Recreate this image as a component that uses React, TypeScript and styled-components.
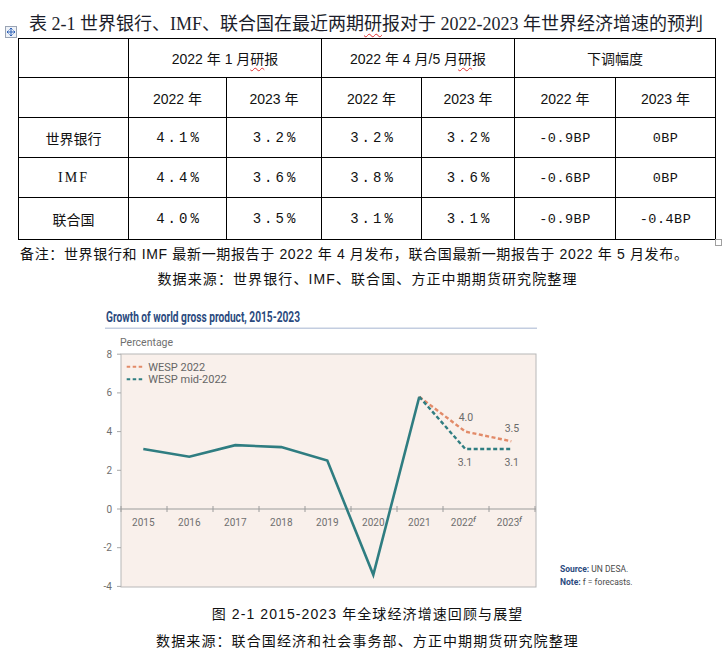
import React from "react";
import styled, { createGlobalStyle } from "styled-components";

const Global = createGlobalStyle`
  html, body { margin: 0; padding: 0; background: #ffffff; }
  body {
    font-family: "Liberation Sans", "Noto Sans CJK SC", sans-serif;
    color: #111111;
  }
`;

const Page = styled.div`
  width: 728px;
  display: flex;
  flex-direction: column;
`;

const TitleRow = styled.div`
  display: flex;
  align-items: flex-end;
  gap: 12px;
  height: 38px;
  padding-left: 5px;
`;

const HandleIcon = styled.svg`
  display: block;
  flex: none;
`;

const TableTitle = styled.h1`
  margin: 0 0 3px 0;
  font-family: "Liberation Serif", "Noto Sans CJK SC", serif;
  font-size: 18px;
  line-height: 22px;
  font-weight: normal;
  color: #1b1d2a;
  white-space: nowrap;
`;

const Flag = styled.span`
  text-decoration: underline wavy #e03030;
  text-decoration-thickness: 1px;
  text-underline-offset: 3px;
`;

const TableWrap = styled.div`
  position: relative;
  margin-left: 18px;
  width: 697px;
`;

const Grid = styled.table`
  border-collapse: collapse;
  table-layout: fixed;
  width: 697px;
`;

const Row = styled.tr<{ $h: number }>`
  height: ${(p) => p.$h}px;
`;

const Cell = styled.td`
  border: 1px solid #000000;
  padding: 0;
  text-align: center;
  vertical-align: middle;
  font-size: 14px;
  color: #111111;
  white-space: nowrap;
`;

const RowName = styled.span<{ $latin?: boolean }>`
  font-family: ${(p) =>
    p.$latin ? `"Liberation Serif", serif` : `"Noto Sans CJK SC", sans-serif`};
  letter-spacing: ${(p) => (p.$latin ? "2px" : "0")};
  font-size: 14px;
`;

const Pct = styled.span`
  font-family: "Liberation Mono", monospace;
  font-size: 14px;
  letter-spacing: 3px;
  margin-right: -3px;
`;

const Bp = styled.span`
  font-family: "Liberation Mono", monospace;
  font-size: 13.5px;
  letter-spacing: 0.5px;
`;

const EndMark = styled.span`
  position: absolute;
  right: -7px;
  bottom: -6px;
  width: 5px;
  height: 5px;
  border: 1px solid #a0a0a0;
`;

const Note = styled.p`
  margin: 4px 0 0 0;
  padding-left: 20px;
  font-size: 14px;
  line-height: 20px;
  letter-spacing: 0.65px;
  color: #111111;
  white-space: nowrap;
`;

const Caption = styled.p<{ $top: number }>`
  margin: ${(p) => p.$top}px 0 0 0;
  text-align: center;
  padding-left: 7px;
  font-size: 14px;
  line-height: 20px;
  letter-spacing: 1.1px;
  color: #111111;
  white-space: nowrap;
`;

const Figure = styled.svg`
  display: block;
  margin: 7px 0 0 100px;
  font-family: "Roboto", "Liberation Sans", sans-serif;
`;

const ChartTitle = styled.text`
  font-family: "Roboto", sans-serif;
  font-weight: 700;
  font-size: 14px;
  fill: #2b4a7e;
`;

const AxisText = styled.text`
  font-size: 10px;
  fill: #6f6f6f;
`;

const LegendText = styled.text`
  font-size: 11px;
  fill: #666666;
`;

const ValueText = styled.text`
  font-size: 10.5px;
  fill: #6a6a6a;
`;

const SourceText = styled.text`
  font-family: "Roboto", sans-serif;
  font-size: 8.5px;
  fill: #4a4a4a;
`;

const SourceBold = styled.tspan`
  font-weight: 700;
  fill: #2b4a7e;
`;

const TEAL = "#2f7d81";
const ORANGE = "#e28a68";

const yv = (v: number) => 213 - v * 19.35;
const xd = (k: number) => 43.3 + 46 * k;

const hist = [3.1, 2.7, 3.3, 3.2, 2.5, -3.4, 5.8];
const years = ["2015", "2016", "2017", "2018", "2019", "2020", "2021", "2022", "2023"];

function Chart() {
  const solid = hist.map((v, i) => `${xd(i)},${yv(v)}`).join(" ");
  const orange = [
    [6, 5.8],
    [7, 4.0],
    [8, 3.5],
  ]
    .map(([k, v]) => `${xd(k)},${yv(v)}`)
    .join(" ");
  const teal = [
    [6, 5.8],
    [7, 3.1],
    [8, 3.1],
  ]
    .map(([k, v]) => `${xd(k)},${yv(v)}`)
    .join(" ");
  return (
    <Figure width={545} height={300} viewBox="0 0 545 300">
      <ChartTitle x={6} y={26} textLength={194} lengthAdjust="spacingAndGlyphs">
        Growth of world gross product, 2015-2023
      </ChartTitle>
      <line x1={5} x2={437} y1={32.3} y2={32.3} stroke="#c3cde0" strokeWidth={1.5} />
      <AxisText x={20} y={49.5} style={{ fontSize: 10.5 }}>
        Percentage
      </AxisText>
      <rect x={21} y={58} width={415} height={233} fill="#f9f0eb" stroke="#b8b8b8" strokeWidth={1} />
      {[8, 6, 4, 2, 0, -2, -4].map((v) => (
        <g key={v}>
          <line x1={17} x2={21} y1={yv(v)} y2={yv(v)} stroke="#a8a8a8" strokeWidth={1} />
          <AxisText x={12} y={yv(v) + 3.5} textAnchor="end">
            {v}
          </AxisText>
        </g>
      ))}
      <line x1={21} x2={436} y1={213} y2={213} stroke="#9c9c9c" strokeWidth={1.2} />
      {Array.from({ length: 10 }).map((_, k) => (
        <line key={k} x1={21 + 46 * k} x2={21 + 46 * k} y1={210} y2={216} stroke="#9c9c9c" strokeWidth={1} />
      ))}
      {years.map((y, k) => (
        <AxisText key={y} x={xd(k) + (k > 6 ? -2 : 0)} y={230} textAnchor="middle">
          {y}
          {k > 6 && (
            <tspan dy={-4} fontSize={7} fontStyle="italic" fontWeight={700}>
              f
            </tspan>
          )}
        </AxisText>
      ))}
      <polyline points={solid} fill="none" stroke={TEAL} strokeWidth={2.6} strokeLinejoin="miter" />
      <polyline points={orange} fill="none" stroke={ORANGE} strokeWidth={2.4} strokeDasharray="4 2.5" />
      <polyline points={teal} fill="none" stroke={TEAL} strokeWidth={2.4} strokeDasharray="4 2.5" />
      <ValueText x={366} y={125} textAnchor="middle">4.0</ValueText>
      <ValueText x={412} y={135.7} textAnchor="middle">3.5</ValueText>
      <ValueText x={365} y={170} textAnchor="middle">3.1</ValueText>
      <ValueText x={411.7} y={170} textAnchor="middle">3.1</ValueText>
      <line x1={26.7} x2={44.3} y1={70.7} y2={70.7} stroke={ORANGE} strokeWidth={2} strokeDasharray="3.5 2.5" />
      <LegendText x={48.3} y={74.5}>WESP 2022</LegendText>
      <line x1={26.7} x2={44.3} y1={83.3} y2={83.3} stroke={TEAL} strokeWidth={2} strokeDasharray="3.5 2.5" />
      <LegendText x={48.3} y={87.2}>WESP mid-2022</LegendText>
      <SourceText x={460} y={276}>
        <SourceBold>Source:</SourceBold> UN DESA.
      </SourceText>
      <SourceText x={460} y={289.3}>
        <SourceBold>Note:</SourceBold> f = forecasts.
      </SourceText>
    </Figure>
  );
}

const rows = [
  { name: "世界银行", latin: false, vals: ["4.1%", "3.2%", "3.2%", "3.2%"], bp: ["-0.9BP", "0BP"] },
  { name: "IMF", latin: true, vals: ["4.4%", "3.6%", "3.8%", "3.6%"], bp: ["-0.6BP", "0BP"] },
  { name: "联合国", latin: false, vals: ["4.0%", "3.5%", "3.1%", "3.1%"], bp: ["-0.9BP", "-0.4BP"] },
];

const colWidths = [110, 98, 95, 100, 93, 101, 100];

export default function App() {
  return (
    <Page>
      <Global />
      <TitleRow>
        <HandleIcon width={12} height={12} viewBox="0 0 12 12">
          <rect x={0.5} y={0.5} width={11} height={11} fill="#eef2f8" stroke="#9aa4b4" />
          <path
            d="M6 2v8M2 6h8M6 2l-1.5 1.5M6 2l1.5 1.5M6 10l-1.5-1.5M6 10l1.5-1.5M2 6l1.5-1.5M2 6l1.5 1.5M10 6l-1.5-1.5M10 6l-1.5 1.5"
            stroke="#2f62b8"
            strokeWidth={1}
            fill="none"
          />
        </HandleIcon>
        <TableTitle>
          表 2-1 世界银行、IMF、联合国在最近两期<Flag>研</Flag>报对于 2022-2023 年世界经济增速的预判
        </TableTitle>
      </TitleRow>
      <TableWrap>
        <Grid>
          <colgroup>
            {colWidths.map((w, i) => (
              <col key={i} style={{ width: w }} />
            ))}
          </colgroup>
          <tbody>
            <Row $h={39}>
              <Cell />
              <Cell colSpan={2}>
                2022 年 1 月<Flag>研</Flag>报
              </Cell>
              <Cell colSpan={2}>
                2022 年 4 月/5 月<Flag>研</Flag>报
              </Cell>
              <Cell colSpan={2}>下调幅度</Cell>
            </Row>
            <Row $h={40}>
              <Cell />
              <Cell>2022 年</Cell>
              <Cell>2023 年</Cell>
              <Cell>2022 年</Cell>
              <Cell>2023 年</Cell>
              <Cell>2022 年</Cell>
              <Cell>2023 年</Cell>
            </Row>
            {rows.map((r, i) => (
              <Row key={r.name} $h={i === 2 ? 42 : 40}>
                <Cell>
                  <RowName $latin={r.latin}>{r.name}</RowName>
                </Cell>
                {r.vals.map((v, j) => (
                  <Cell key={j}>
                    <Pct>{v}</Pct>
                  </Cell>
                ))}
                {r.bp.map((v, j) => (
                  <Cell key={j}>
                    <Bp>{v}</Bp>
                  </Cell>
                ))}
              </Row>
            ))}
          </tbody>
        </Grid>
        <EndMark />
      </TableWrap>
      <Note>备注：世界银行和 IMF 最新一期报告于 2022 年 4 月发布，联合国最新一期报告于 2022 年 5 月发布。</Note>
      <Caption $top={5}>数据来源：世界银行、IMF、联合国、方正中期期货研究院整理</Caption>
      <Chart />
      <Caption $top={8}>图 2-1 2015-2023 年全球经济增速回顾与展望</Caption>
      <Caption $top={7}>数据来源：联合国经济和社会事务部、方正中期期货研究院整理</Caption>
    </Page>
  );
}
